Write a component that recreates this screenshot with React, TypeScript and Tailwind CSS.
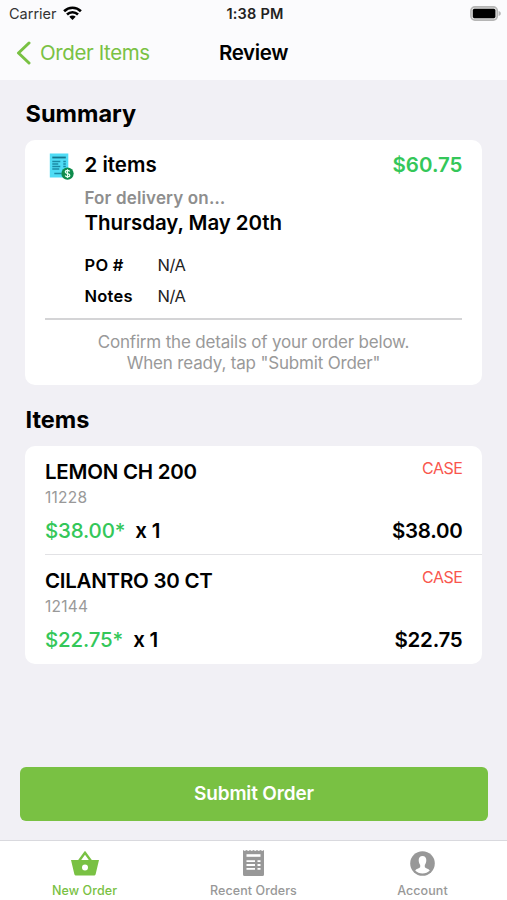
import type { ReactNode } from 'react';

interface OrderItem {
  sku: string;
  name: string;
  unit: string;
  price: string;
  qty: number;
  total: string;
}

interface TabProps {
  label: string;
  active?: boolean;
  children: ReactNode;
}

const items: OrderItem[] = [
  { sku: '11228', name: 'LEMON CH 200', unit: 'CASE', price: '$38.00*', qty: 1, total: '$38.00' },
  { sku: '12144', name: 'CILANTRO 30 CT', unit: 'CASE', price: '$22.75*', qty: 1, total: '$22.75' },
];

function StatusBar() {
  return (
    <div className="grid h-[27px] grid-cols-3 items-center pt-px pr-[6px] pl-[9px] text-[14.5px] leading-none">
      <div className="flex items-center gap-[6px] text-[#333]">
        <span>Carrier</span>
        <svg className="mt-[-3px]" width="19" height="14" viewBox="0 0 19 14" fill="none" stroke="#000" strokeWidth="2.6">
          <path d="M1.1 5.2a12 12 0 0 1 16.8 0" />
          <path d="M4 8.5a8 8 0 0 1 11 0" />
          <path d="M9.5 14 6.3 10.8a4.5 4.5 0 0 1 6.4 0z" fill="#000" stroke="none" />
        </svg>
      </div>
      <span className="text-center font-semibold tracking-[0.2px] text-[#222]">1:38 PM</span>
      <svg className="mt-[-1px] justify-self-end" width="31" height="15" viewBox="0 0 31 15">
        <rect x="0.9" y="0.9" width="26.4" height="13.2" rx="4" fill="#e2e2e2" stroke="#b5b5b5" strokeWidth="1.6" />
        <rect x="2.8" y="2.8" width="22.6" height="9.4" rx="1.6" fill="#000" />
        <path d="M28.6 5v5c1.6-.6 2.2-1.5 2.2-2.5S30.2 5.6 28.6 5z" fill="#b5b5b5" />
      </svg>
    </div>
  );
}

function NavBar() {
  return (
    <div className="grid h-[53px] grid-cols-3 items-center text-[20.5px]">
      <button className="flex items-center gap-[9px] pl-[16px] tracking-[-0.4px] whitespace-nowrap text-[#79c143]">
        <svg className="mt-[-2px]" width="15" height="24" viewBox="0 0 15 24" fill="none" stroke="currentColor" strokeWidth="3" strokeLinecap="round" strokeLinejoin="round">
          <path d="M13 2 2.5 12 13 22" />
        </svg>
        Order Items
      </button>
      <h1 className="text-center font-semibold tracking-[-0.35px] text-black">Review</h1>
    </div>
  );
}

function InvoiceIcon() {
  return (
    <svg width="26" height="28" viewBox="0 0 26 28">
      <rect x="0.8" y="0.5" width="18.5" height="24" fill="#4fdcf5" />
      <path d="M3.3 4.5h13.5" stroke="#15748c" strokeWidth="1.8" />
      <path d="M3.3 8.5h8M3.3 11h6M3.3 13.5h8M3.3 16h7M14.3 8.5h2.5M14.3 11h2.5M14.3 13.5h2.5M5.3 20.5h7" stroke="#1b8aa5" strokeWidth="1.3" />
      <circle cx="18.5" cy="20.6" r="6.2" fill="#0f8b4c" />
      <path
        d="M20.7 18.5c-.5-.9-1.3-1.100-2.200-1.100-1.300 0-2.200.6-2.200 1.600 0 2.200 4.500 1 4.500 3.200 0 1-.9 1.600-2.300 1.600-1 0-1.900-.4-2.300-1.200M18.500 16.300v8.600"
        fill="none"
        stroke="#e9fff2"
        strokeWidth="1.2"
      />
    </svg>
  );
}

function SummaryCard() {
  return (
    <section className="h-[245px] rounded-[10px] bg-white px-[20px] pt-[12px]">
      <div className="flex items-start pl-[4px]">
        <div className="mt-[1px] w-[35.5px] shrink-0">
          <InvoiceIcon />
        </div>
        <div className="flex-1">
          <div className="flex h-[26px] items-center justify-between text-[20.5px] font-semibold">
            <span>2 items</span>
            <span className="mr-[-0.5px] text-[#34c759]">$60.75</span>
          </div>
          <p className="mt-[9px] h-[22px] text-[17px] leading-[22px] font-semibold tracking-[0.15px] text-[#8e8e8e]">For delivery on…</p>
          <p className="mt-[1px] h-[26px] text-[20.5px] leading-[26px] font-semibold tracking-[-0.07px]">Thursday, May 20th</p>
          <dl className="mt-[18px] grid grid-cols-[73px_1fr] gap-y-[9px] text-[16.5px] leading-[22px]">
            <dt className="font-semibold tracking-[0.25px]">PO #</dt>
            <dd className="tracking-[-0.5px] text-[#222]">N/A</dd>
            <dt className="font-semibold tracking-[0.25px]">Notes</dt>
            <dd className="tracking-[-0.5px] text-[#222]">N/A</dd>
          </dl>
        </div>
      </div>
      <p className="mt-[11px] border-t-2 border-[#d4d4d6] pt-[12px] text-center text-[17px] leading-[20.5px] tracking-[-0.18px] text-[#999]">
        Confirm the details of your order below.
        <br />
        When ready, tap "Submit Order"
      </p>
    </section>
  );
}

function ItemRow({ item, first }: { item: OrderItem; first: boolean }) {
  return (
    <li className={first ? 'h-[108px] pt-[13px] pr-[19.5px]' : 'h-[110px] border-t border-[#e2e2e5] pt-[13px] pr-[19.5px]'}>
      <div className="flex items-start justify-between">
        <span className="text-[20.5px] leading-[26px] font-semibold tracking-[-0.25px]">{item.name}</span>
        <span className="mt-[-2px] text-[16px] leading-[22px] tracking-[-0.45px] text-[#f9564d]">{item.unit}</span>
      </div>
      <p className="mt-[3px] text-[15.5px] leading-[20px] tracking-[0.25px] text-[#999]">{item.sku}</p>
      <div className="mt-[10px] flex items-center text-[20.5px] leading-[26px] font-semibold tracking-[-0.25px]">
        <span className="font-medium tracking-[-0.15px] text-[#34c759]">{item.price}</span>
        <span className="ml-[10px]">x {item.qty}</span>
        <span className="ml-auto">{item.total}</span>
      </div>
    </li>
  );
}

function Tab({ label, active = false, children }: TabProps) {
  return (
    <button className={active ? 'flex flex-col items-center text-[#79c143]' : 'flex flex-col items-center text-[#989898]'}>
      <span className="flex h-[42px] items-center justify-center pt-[2px]">{children}</span>
      <span className="text-[12.5px] leading-[16px] font-medium tracking-[0.08px]">{label}</span>
    </button>
  );
}

export default function App() {
  return (
    <div className="flex h-[900px] w-[507px] flex-col overflow-hidden bg-[#f1f0f5] font-['Inter',sans-serif] text-black">
      <header className="h-[80px] shrink-0 bg-[#fbfbfd]">
        <StatusBar />
        <NavBar />
      </header>

      <main className="flex-1 px-[25px]">
        <h2 className="mt-[19px] h-[30px] pl-[0.5px] text-[23.5px] leading-[30px] font-bold">Summary</h2>
        <div className="mt-[11px]">
          <SummaryCard />
        </div>
        <h2 className="mt-[20px] h-[30px] pl-[0.5px] text-[23.5px] leading-[30px] font-bold">Items</h2>
        <ul className="mt-[11px] rounded-[10px] bg-white pl-[20px]">
          {items.map((item, i) => (
            <ItemRow key={item.sku} item={item} first={i === 0} />
          ))}
        </ul>
      </main>

      <div className="h-[73px] shrink-0 pr-[19px] pl-[20px]">
        <button className="h-[54px] w-full rounded-[6px] bg-[#79c143] text-[19px] font-semibold tracking-[-0.15px] text-white">Submit Order</button>
      </div>

      <nav className="grid h-[60px] shrink-0 grid-cols-3 border-t border-[#d9d9de] bg-white">
        <Tab label="New Order" active>
          <svg width="28" height="25" viewBox="0 0 28 25" fill="currentColor">
            <path
              fillRule="evenodd"
              d="M0 9h7.2L13.2.7c.4-.6 1.2-.6 1.6 0L20.8 9H28L24.7 23c-.3 1-1 1.5-2 1.5H5.3c-1 0-1.700-.5-2-1.500zM10.200 9h7.600L14 3.700zM14 13.500a3 3 0 1 0 0 6 3 3 0 0 0 0-6z"
            />
          </svg>
        </Tab>
        <Tab label="Recent Orders">
          <svg width="21" height="26" viewBox="0 0 21 26">
            <path
              d="M0 0l1.750 1L3.500 0l1.750 1L7 0l1.750 1L10.500 0l1.750 1L14 0l1.750 1L17.500 0l1.750 1L21 0v24.500q0 1.500-1.500 1.500h-18Q0 26 0 24.500z"
              fill="currentColor"
            />
            <path d="M3.5 5.5h14" stroke="#fff" strokeWidth="2.6" />
            <path d="M3.5 11.2h8.5M14.5 11.2h3M3.5 15h8.5M14.5 15h3M3.5 18.8h8.5M14.5 18.8h3" stroke="#fff" strokeWidth="1.8" />
          </svg>
        </Tab>
        <Tab label="Account">
          <svg width="25" height="25" viewBox="0 0 25 25">
            <circle cx="12.5" cy="12.5" r="12.3" fill="currentColor" />
            <path
              d="M12.5 5c-2.6 0-3.8 1.7-3.8 4.1 0 2 .6 3.7 1.5 4.9v2c-.3 1.3-4 1.5-5 3.6 1.9 1.8 4.4 2.9 7.3 2.900s5.400-1.100 7.300-2.900c-1-2.100-4.700-2.300-5-3.600v-2c.9-1.200 1.500-2.900 1.500-4.900 0-2.400-1.200-4.100-3.800-4.100z"
              fill="#fff"
            />
          </svg>
        </Tab>
      </nav>
    </div>
  );
}
